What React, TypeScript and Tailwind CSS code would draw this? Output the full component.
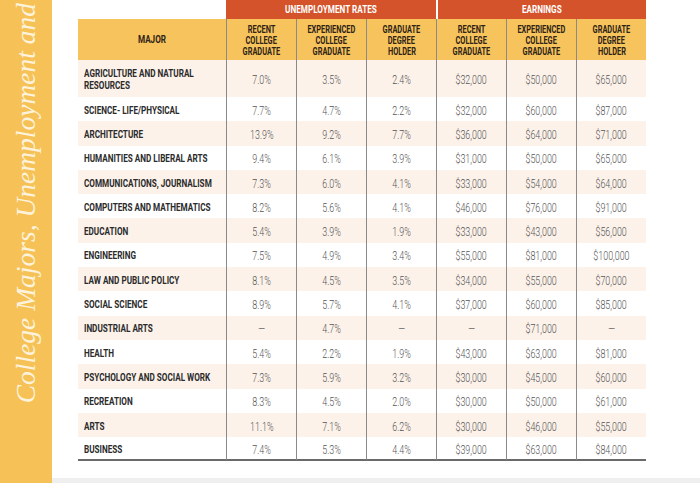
import React from 'react'

const rows: [string[], string[], string[]][] = [
  [['AGRICULTURE AND NATURAL', 'RESOURCES'], ['7.0%', '3.5%', '2.4%'], ['$32,000', '$50,000', '$65,000']],
  [['SCIENCE- LIFE/PHYSICAL'], ['7.7%', '4.7%', '2.2%'], ['$32,000', '$60,000', '$87,000']],
  [['ARCHITECTURE'], ['13.9%', '9.2%', '7.7%'], ['$36,000', '$64,000', '$71,000']],
  [['HUMANITIES AND LIBERAL ARTS'], ['9.4%', '6.1%', '3.9%'], ['$31,000', '$50,000', '$65,000']],
  [['COMMUNICATIONS, JOURNALISM'], ['7.3%', '6.0%', '4.1%'], ['$33,000', '$54,000', '$64,000']],
  [['COMPUTERS AND MATHEMATICS'], ['8.2%', '5.6%', '4.1%'], ['$46,000', '$76,000', '$91,000']],
  [['EDUCATION'], ['5.4%', '3.9%', '1.9%'], ['$33,000', '$43,000', '$56,000']],
  [['ENGINEERING'], ['7.5%', '4.9%', '3.4%'], ['$55,000', '$81,000', '$100,000']],
  [['LAW AND PUBLIC POLICY'], ['8.1%', '4.5%', '3.5%'], ['$34,000', '$55,000', '$70,000']],
  [['SOCIAL SCIENCE'], ['8.9%', '5.7%', '4.1%'], ['$37,000', '$60,000', '$85,000']],
  [['INDUSTRIAL ARTS'], ['—', '4.7%', '—'], ['—', '$71,000', '—']],
  [['HEALTH'], ['5.4%', '2.2%', '1.9%'], ['$43,000', '$63,000', '$81,000']],
  [['PSYCHOLOGY AND SOCIAL WORK'], ['7.3%', '5.9%', '3.2%'], ['$30,000', '$45,000', '$60,000']],
  [['RECREATION'], ['8.3%', '4.5%', '2.0%'], ['$30,000', '$50,000', '$61,000']],
  [['ARTS'], ['11.1%', '7.1%', '6.2%'], ['$30,000', '$46,000', '$55,000']],
  [['BUSINESS'], ['7.4%', '5.3%', '4.4%'], ['$39,000', '$63,000', '$84,000']],
]

const subHeads = [
  ['RECENT', 'COLLEGE', 'GRADUATE'],
  ['EXPERIENCED', 'COLLEGE', 'GRADUATE'],
  ['GRADUATE', 'DEGREE', 'HOLDER'],
]

// the print uses a condensed face; squeeze Roboto to match
const Squeeze = ({ children, left }: { children: React.ReactNode; left?: boolean }) => (
  <span className={`inline-block whitespace-nowrap scale-x-[0.74] ${left ? 'origin-left' : 'origin-center'}`}>{children}</span>
)

const App = () => {
  return (
    <div className="flex h-[483px] w-[700px] overflow-hidden bg-white font-['Roboto',sans-serif]">
      <div className="flex h-full w-[52px] shrink-0 flex-col items-center justify-end overflow-hidden bg-[#f6c257] pb-[80px]">
        <div className="rotate-180 whitespace-nowrap font-['Liberation_Serif',serif] text-[27.5px] italic leading-none text-[#fdf3dc] [writing-mode:vertical-rl]">
          College Majors, Unemployment and
        </div>
      </div>
      <div className="flex flex-1 flex-col">
        <div className="ml-[26px] grid w-[568px] grid-cols-[148px_repeat(6,70px)]">
          <div className="h-[19px]" />
          <div className="col-span-3 flex h-[19px] items-center justify-center bg-[#d5532a] pt-[1px] text-[11px] font-bold text-white">
            <Squeeze>UNEMPLOYMENT RATES</Squeeze>
          </div>
          <div className="col-span-3 flex h-[19px] items-center justify-center border-l-2 border-white bg-[#d5532a] pt-[1px] text-[11px] font-bold text-white">
            <Squeeze>EARNINGS</Squeeze>
          </div>

          <div className="flex h-[41px] items-center justify-center bg-[#f7c35c] pt-[2px] text-[11px] font-bold text-[#2e2418]">
            <Squeeze>MAJOR</Squeeze>
          </div>
          {[...subHeads, ...subHeads].map((h, i) => (
            <div
              key={i}
              className="flex h-[41px] flex-col items-center justify-center border-l border-[#8a8a8a] bg-[#f7c35c] pt-[1px] text-[10px] font-bold leading-[11px] text-[#2e2418]"
            >
              {h.map((l) => (
                <Squeeze key={l}>{l}</Squeeze>
              ))}
            </div>
          ))}

          {rows.map(([name, rates, pay], i) => {
            const bg = i % 2 === 0 ? 'bg-[#fcf2ea]' : 'bg-white'
            const h = i === 0 ? 'h-[37px]' : 'h-[24.3px]'
            const last = i === rows.length - 1 ? 'border-b-2 border-b-[#6a6a6a]' : ''
            return (
              <React.Fragment key={name[0]}>
                <div className={`flex ${h} flex-col justify-center px-[6px] pt-[3px] text-[11px] font-bold leading-[12px] text-[#2b2b2b] ${bg} ${last}`}>
                  {name.map((l) => (
                    <Squeeze key={l} left>
                      {l}
                    </Squeeze>
                  ))}
                </div>
                {[...rates, ...pay].map((v, j) => (
                  <div
                    key={j}
                    className={`flex ${h} items-center justify-center border-l border-[#8a8a8a] pt-[3px] text-[12px] font-light text-[#555] ${bg} ${last}`}
                  >
                    <Squeeze>{v}</Squeeze>
                  </div>
                ))}
              </React.Fragment>
            )
          })}
        </div>
        <div className="flex-1" />
        <div className="h-[5px] bg-[#efefef]" />
      </div>
    </div>
  )
}

export default App
